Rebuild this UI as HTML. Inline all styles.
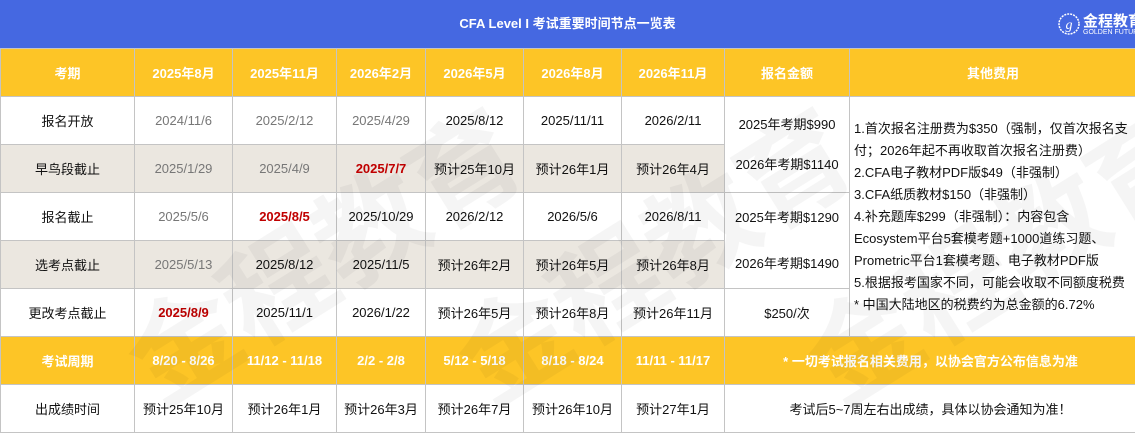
<!DOCTYPE html>
<html><head><meta charset="utf-8"><style>
body{margin:0;width:1135px;height:433px;overflow:hidden;background:#fff;font-family:"Liberation Sans","Noto Sans CJK SC",sans-serif;position:relative}
.top{position:absolute;left:0;top:0;width:1135px;height:48px;background:#4568e1;color:#fff;font-weight:bold;font-size:13px;text-align:center;line-height:48px}
.logo{position:absolute;left:1058px;top:10px;height:30px;color:#fff}
table{position:absolute;left:0;top:48px;border-collapse:collapse;table-layout:fixed;width:1136px}
td{border:1px solid #c4c4c4;height:47px;padding:0;text-align:center;font-size:13px;color:#111}
tr.y td{background:#fdc526;color:#fff;font-weight:bold}
tr.g td{background:#ebe7e0}
td.w{background:#fff!important}
.gr{color:#777}
.r{color:#c00000;font-weight:bold}
.fee{text-align:left;font-size:13px;line-height:22px;padding:0 0 0 4px;vertical-align:middle;background:#fff!important;white-space:nowrap}
.wm{position:absolute;font-size:110px;font-weight:bold;color:#000;opacity:.035;transform:rotate(-32deg);white-space:nowrap;pointer-events:none}
</style></head><body>
<div class="top">CFA Level I 考试重要时间节点一览表</div>
<div class="logo"><svg width="22" height="24" viewBox="0 0 22 24" style="position:absolute;left:0;top:2px"><circle cx="11" cy="12" r="10" fill="none" stroke="#fff" stroke-width="1.5" stroke-dasharray="2 1"/><text x="11" y="17" font-size="14" fill="#fff" text-anchor="middle" font-style="italic" font-family="Liberation Serif">g</text></svg><div style="position:absolute;left:25px;top:0;font-size:15px;font-weight:bold;white-space:nowrap">金程教育</div><div style="position:absolute;left:25px;top:19px;font-size:7px;white-space:nowrap">GOLDEN FUTURE</div></div>
<table>
<colgroup><col style="width:134px"><col style="width:98px"><col style="width:104px"><col style="width:89px"><col style="width:98px"><col style="width:98px"><col style="width:103px"><col style="width:125px"><col style="width:287px"></colgroup>
<tr class="y"><td>考期</td><td>2025年8月</td><td>2025年11月</td><td>2026年2月</td><td>2026年5月</td><td>2026年8月</td><td>2026年11月</td><td>报名金额</td><td>其他费用</td></tr>
<tr><td>报名开放</td><td class="gr">2024/11/6</td><td class="gr">2025/2/12</td><td class="gr">2025/4/29</td><td>2025/8/12</td><td>2025/11/11</td><td>2026/2/11</td><td rowspan="2" class="w" style="line-height:40px">2025年考期$990<br>2026年考期$1140</td><td rowspan="5" class="fee">1.首次报名注册费为$350（强制，仅首次报名支<br>付；2026年起不再收取首次报名注册费）<br>2.CFA电子教材PDF版$49（非强制）<br>3.CFA纸质教材$150（非强制）<br>4.补充题库$299（非强制）：内容包含<br>Ecosystem平台5套模考题+1000道练习题、<br>Prometric平台1套模考题、电子教材PDF版<br>5.根据报考国家不同，可能会收取不同额度税费<br>* 中国大陆地区的税费约为总金额的6.72%</td></tr>
<tr class="g"><td>早鸟段截止</td><td class="gr">2025/1/29</td><td class="gr">2025/4/9</td><td class="r">2025/7/7</td><td>预计25年10月</td><td>预计26年1月</td><td>预计26年4月</td></tr>
<tr><td>报名截止</td><td class="gr">2025/5/6</td><td class="r">2025/8/5</td><td>2025/10/29</td><td>2026/2/12</td><td>2026/5/6</td><td>2026/8/11</td><td rowspan="2" class="w" style="line-height:46px">2025年考期$1290<br>2026年考期$1490</td></tr>
<tr class="g"><td>选考点截止</td><td class="gr">2025/5/13</td><td>2025/8/12</td><td>2025/11/5</td><td>预计26年2月</td><td>预计26年5月</td><td>预计26年8月</td></tr>
<tr><td>更改考点截止</td><td class="r">2025/8/9</td><td>2025/11/1</td><td>2026/1/22</td><td>预计26年5月</td><td>预计26年8月</td><td>预计26年11月</td><td>$250/次</td></tr>
<tr class="y"><td>考试周期</td><td>8/20 - 8/26</td><td>11/12 - 11/18</td><td>2/2 - 2/8</td><td>5/12 - 5/18</td><td>8/18 - 8/24</td><td>11/11 - 11/17</td><td colspan="2">* 一切考试报名相关费用，以协会官方公布信息为准</td></tr>
<tr><td>出成绩时间</td><td>预计25年10月</td><td>预计26年1月</td><td>预计26年3月</td><td>预计26年7月</td><td>预计26年10月</td><td>预计27年1月</td><td colspan="2">考试后5~7周左右出成绩，具体以协会通知为准！</td></tr>
</table>
<div class="wm" style="left:100px;top:170px">金程教育</div>
<div class="wm" style="left:430px;top:170px">金程教育</div>
<div class="wm" style="left:780px;top:170px">金程教育</div>
</body></html>
